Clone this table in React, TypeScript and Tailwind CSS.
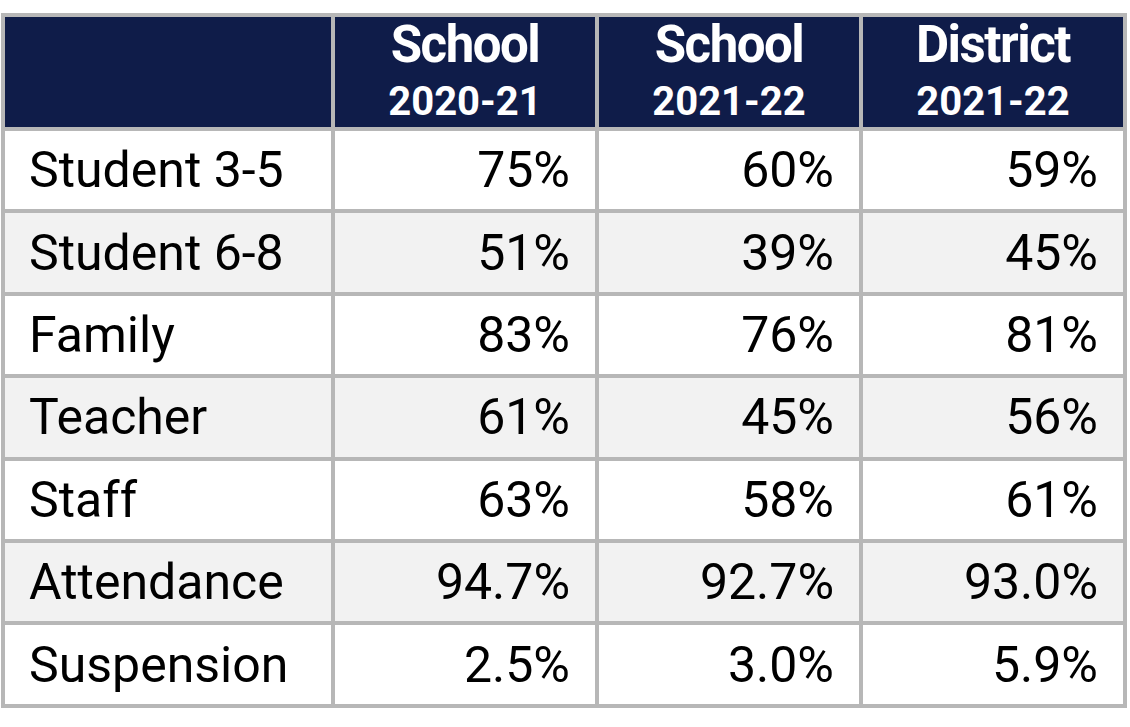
const rows = [
  { label: "Student 3-5", a: "75%", b: "60%", c: "59%" },
  { label: "Student 6-8", a: "51%", b: "39%", c: "45%" },
  { label: "Family", a: "83%", b: "76%", c: "81%" },
  { label: "Teacher", a: "61%", b: "45%", c: "56%" },
  { label: "Staff", a: "63%", b: "58%", c: "61%" },
  { label: "Attendance", a: "94.7%", b: "92.7%", c: "93.0%" },
  { label: "Suspension", a: "2.5%", b: "3.0%", c: "5.9%" },
]

const heads = [
  { top: "School", bottom: "2020-21" },
  { top: "School", bottom: "2021-22" },
  { top: "District", bottom: "2021-22" },
]

export default function App() {
  return (
    <div className="min-h-screen bg-white pl-[1px] pt-[13px] font-['Roboto','Liberation_Sans',sans-serif] text-black">
      <table className="border-separate border-spacing-[4px] bg-[#b7b7b7]">
        <thead>
          <tr className="h-[110px]">
            <th className="w-[326px] bg-[#0f1c49] p-0"></th>
            {heads.map((h, i) => (
              <th key={i} className="w-[260px] bg-[#0f1c49] p-0 pb-[3px] text-center font-bold text-white">
                <div className="text-[51px] leading-[56px] tracking-[-1.5px]">{h.top}</div>
                <div className="mt-[7px] text-[40px] leading-[44px]">{h.bottom}</div>
              </th>
            ))}
          </tr>
        </thead>
        <tbody>
          {rows.map((r, i) => (
            <tr key={r.label} className={`h-[78.4px] text-[50px] ${i % 2 === 1 ? "bg-[#f2f2f2]" : "bg-white"}`}>
              <td className="py-0 pl-[24px] pr-[25px] text-left leading-none">{r.label}</td>
              <td className="px-[25px] py-0 text-right leading-none">{r.a}</td>
              <td className="px-[25px] py-0 text-right leading-none">{r.b}</td>
              <td className="px-[25px] py-0 text-right leading-none">{r.c}</td>
            </tr>
          ))}
        </tbody>
      </table>
    </div>
  )
}
